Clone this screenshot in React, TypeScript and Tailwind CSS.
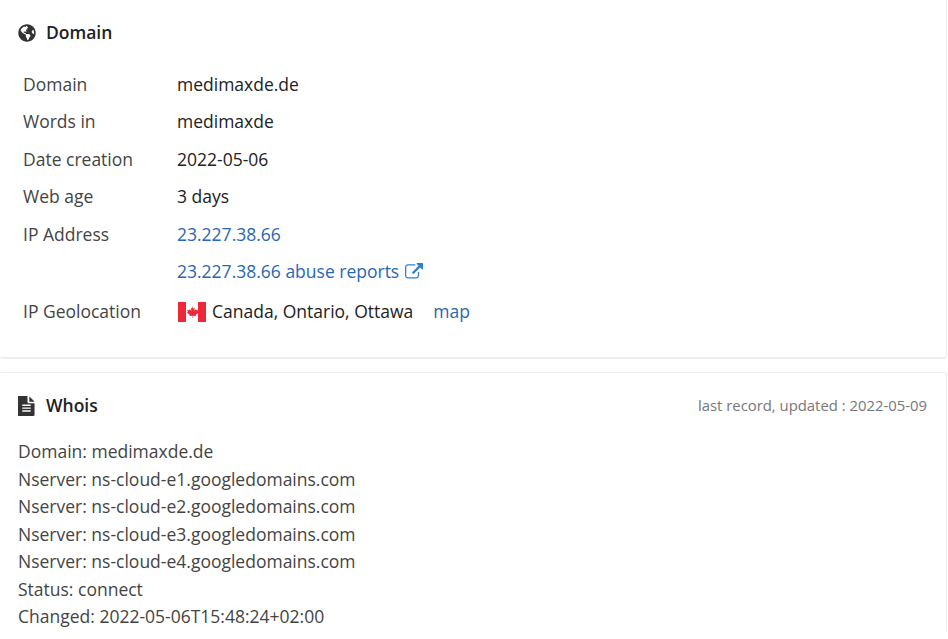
import { FaGlobeAmericas } from "react-icons/fa"

const whois = [
  "Domain: medimaxde.de",
  "Nserver: ns-cloud-e1.googledomains.com",
  "Nserver: ns-cloud-e2.googledomains.com",
  "Nserver: ns-cloud-e3.googledomains.com",
  "Nserver: ns-cloud-e4.googledomains.com",
  "Status: connect",
  "Changed: 2022-05-06T15:48:24+02:00",
]

function Row({ label, children }: { label?: string; children: React.ReactNode }) {
  return (
    <div className="flex py-[5px] leading-[27.5px]">
      <div className="w-[154px] text-[#444]">{label}</div>
      <div className="flex items-center text-[#222]">{children}</div>
    </div>
  )
}

function CanadaFlag() {
  return (
    <svg viewBox="0 0 28 20" className="ml-[1px] mr-[6px] h-[20px] w-[28px]">
      <rect width="28" height="20" fill="#fff" />
      <rect width="8" height="20" fill="#ed2939" />
      <rect x="20" width="8" height="20" fill="#ed2939" />
      <path
        d="M14 4l1.3 2.4 1.4-.7-.5 3 1.8-1.6.4 1.2 2-.3-.6 2 .9.5-3 2.4.3 1.2-3-.4V16h-.4v-2.3l-3 .4.3-1.2-3-2.4.9-.5-.6-2 2 .3.4-1.2 1.8 1.6-.5-3 1.4.7z"
        fill="#ed2939"
      />
    </svg>
  )
}

function ExternalLink() {
  return (
    <svg viewBox="0 0 1792 1792" fill="currentColor" className="ml-[6px] h-[18px] w-[18px] text-[#2f80d0]">
      <path d="M1408 928v320q0 119-84.5 203.5t-203.5 84.5h-832q-119 0-203.5-84.5t-84.5-203.5v-832q0-119 84.5-203.5t203.5-84.5h704q14 0 23 9t9 23v64q0 14-9 23t-23 9h-704q-66 0-113 47t-47 113v832q0 66 47 113t113 47h832q66 0 113-47t47-113v-320q0-14 9-23t23-9h64q14 0 23 9t9 23zm384-864v512q0 26-19 45t-45 19-45-19l-176-176-652 652q-10 10-23 10t-23-10l-114-114q-10-10-10-23t10-23l652-652-176-176q-19-19-19-45t19-45 45-19h512q26 0 45 19t19 45z" />
    </svg>
  )
}

function FileText() {
  return (
    <svg viewBox="128 0 1536 1792" fill="currentColor" className="mr-[11px] h-[20px] w-[17px] text-[#333]">
      <path d="M1596 476q14 14 28 36h-472v-472q22 14 36 28zm-476 164h504v1056q0 40-28 68t-68 28h-1344q-40 0-68-28t-28-68v-1600q0-40 28-68t68-28h800v544q0 40 28 68t68 28zm160 736v-64q0-14-9-23t-23-9h-704q-14 0-23 9t-9 23v64q0 14 9 23t23 9h704q14 0 23-9t9-23zm0-256v-64q0-14-9-23t-23-9h-704q-14 0-23 9t-9 23v64q0 14 9 23t23 9h704q14 0 23-9t9-23zm0-256v-64q0-14-9-23t-23-9h-704q-14 0-23 9t-9 23v64q0 14 9 23t23 9h704q14 0 23-9t9-23z" />
    </svg>
  )
}

export default function App() {
  return (
    <div className="h-[639px] overflow-hidden bg-white pr-[1px] font-['Open_Sans',sans-serif] text-[17.5px] text-[#444]">
      <section className="h-[359px] rounded-b-[3px] border-b-2 border-r border-[#eeeeee] pl-[18px] pt-[19px]">
        <h2 className="flex items-center text-[17.5px] font-semibold leading-[27px] text-[#222]">
          <FaGlobeAmericas className="mr-[10px] h-[18px] w-[18px] text-[#333]" />
          Domain
        </h2>
        <div className="ml-[5px] mt-[19.6px]">
          <Row label="Domain">medimaxde.de</Row>
          <Row label="Words in">medimaxde</Row>
          <Row label="Date creation">2022-05-06</Row>
          <Row label="Web age">3 days</Row>
          <Row label="IP Address">
            <a className="text-[#2a67b1]">23.227.38.66</a>
          </Row>
          <Row>
            <a className="flex items-center text-[#2a67b1]">
              23.227.38.66 abuse reports
              <ExternalLink />
            </a>
          </Row>
          <div className="mt-[2.4px]">
            <Row label="IP Geolocation">
              <CanadaFlag />
              Canada, Ontario, Ottawa
              <a className="ml-[20px] text-[#2a67b1]">map</a>
            </Row>
          </div>
        </div>
      </section>

      <section className="mt-[13px] rounded-t-[3px] border-t border-r border-[#eeeeee] px-[18px] pt-[19px]">
        <div className="flex items-center justify-between pr-[1px]">
          <h2 className="flex items-center text-[17.5px] font-semibold leading-[27px] text-[#222]">
            <FileText />
            Whois
          </h2>
          <span className="text-[14.875px] text-[#777]">last record, updated : 2022-05-09</span>
        </div>
        <div className="mt-[19px] leading-[27.5px]">
          {whois.map((line) => (
            <div key={line}>{line}</div>
          ))}
        </div>
      </section>
    </div>
  )
}
